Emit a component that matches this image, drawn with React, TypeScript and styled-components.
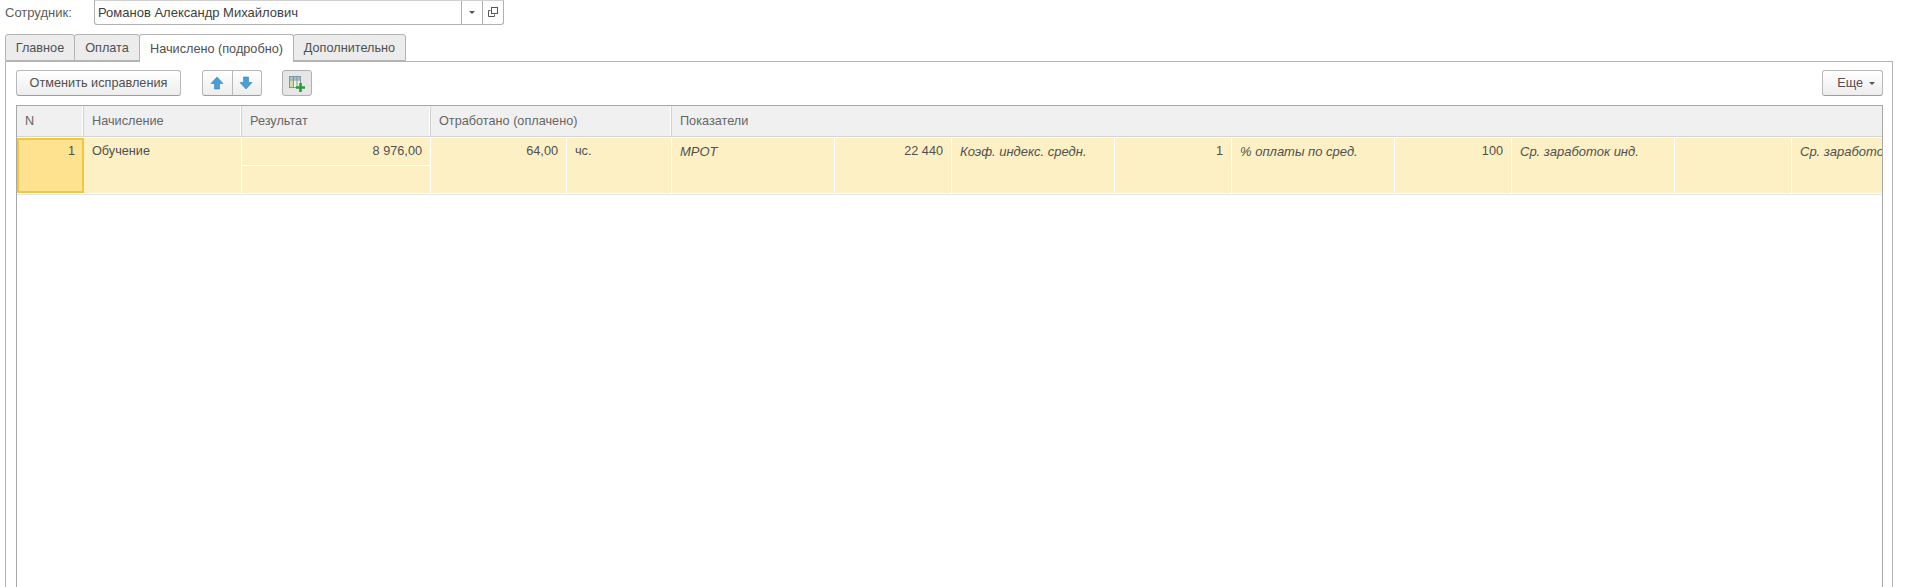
import styled, { createGlobalStyle } from "styled-components";

const GlobalStyle = createGlobalStyle`
  html, body {
    margin: 0;
    height: 100%;
    overflow: hidden;
    background: #fff;
  }

  body {
    font-family: "Liberation Sans", Arial, sans-serif;
    font-size: 12.7px;
    color: #505050;
  }

  * {
    box-sizing: border-box;
  }
`;

const subColumns = [
  { text: "МРОТ", value: "22 440" },
  { text: "Коэф. индекс. средн.", value: "1" },
  { text: "% оплаты по сред.", value: "100" },
  { text: "Ср. заработок инд.", value: "" },
  { text: "Ср. заработок", value: "" },
];

export default function App() {
  return (
    <Page>
      <GlobalStyle />
      <EmployeeRow>
        <FieldLabel>Сотрудник:</FieldLabel>
        <Select>
          <SelectValue>Романов Александр Михайлович</SelectValue>
          <SelectButton>
            <Caret />
          </SelectButton>
          <SelectButton>
            <svg width="12" height="12" viewBox="0 0 12 12" fill="none" stroke="#555">
              <path d="M3.5 4.5H1.5V10.5H7.5V8.5" />
              <rect x="4.5" y="1.5" width="6" height="6" />
            </svg>
          </SelectButton>
        </Select>
      </EmployeeRow>

      <Tabs>
        <Tab $width={70}>Главное</Tab>
        <Tab $width={66}>Оплата</Tab>
        <Tab $width={155} $active>
          Начислено (подробно)
        </Tab>
        <Tab $width={113}>Дополнительно</Tab>
      </Tabs>

      <Panel>
        <Toolbar>
          <Button>Отменить исправления</Button>
          <ButtonGroup>
            <IconButton>
              <svg width="16" height="16" viewBox="0 0 16 16">
                <path d="M8 2L14 8.5H10.5V14H5.5V8.5H2Z" fill="#4a9fd8" stroke="#2f83bd" strokeWidth="0.6" />
              </svg>
            </IconButton>
            <IconButton>
              <svg width="16" height="16" viewBox="0 0 16 16">
                <path d="M8 14L14 7.5H10.5V2H5.5V7.5H2Z" fill="#4a9fd8" stroke="#2f83bd" strokeWidth="0.6" />
              </svg>
            </IconButton>
          </ButtonGroup>
          <ToggleButton>
            <svg width="20" height="18" viewBox="0 0 20 18">
              <rect x="2.5" y="2.5" width="11" height="11" fill="#eef1ea" stroke="#7b98a3" />
              <rect x="3" y="3" width="10" height="2.5" fill="#a9c0c8" />
              <rect x="3" y="6" width="3" height="7" fill="#cfe0a6" />
              <path d="M6.5 3V13.5M10 3V13M3 6H13" stroke="#7b98a3" fill="none" />
              <path d="M13.5 9V18M9 13.5H18" stroke="#2f9a3a" strokeWidth="2.6" fill="none" />
            </svg>
          </ToggleButton>
          <MoreButton>
            Еще
            <Caret />
          </MoreButton>
        </Toolbar>

        <Table>
          <HeaderRow>
            <HeaderCell>N</HeaderCell>
            <HeaderCell>Начисление</HeaderCell>
            <HeaderCell>Результат</HeaderCell>
            <HeaderCell>Отработано (оплачено)</HeaderCell>
            <HeaderCell>Показатели</HeaderCell>
          </HeaderRow>
          <DataRow>
            <NumberCell>1</NumberCell>
            <Cell $width={158}>Обучение</Cell>
            <ResultCell>
              <ResultLine>8 976,00</ResultLine>
              <ResultLine />
            </ResultCell>
            <Cell $width={136} $right>
              64,00
            </Cell>
            <Cell $width={105}>чс.</Cell>
            {subColumns.map((col) => (
              <IndicatorPair key={col.text}>
                <Cell $width={163} $italic>
                  {col.text}
                </Cell>
                <Cell $width={117} $right>
                  {col.value}
                </Cell>
              </IndicatorPair>
            ))}
          </DataRow>
        </Table>
      </Panel>
    </Page>
  );
}

const Page = styled.div`
  height: 100vh;
  display: flex;
  flex-direction: column;
  padding: 0 12px 0 5px;
  overflow: hidden;
`;

const EmployeeRow = styled.div`
  display: flex;
  align-items: center;
  height: 24px;
  margin-bottom: 10px;
  flex: none;
`;

const FieldLabel = styled.span`
  width: 89px;
  font-size: 13px;
  color: #5c5c5c;
`;

const Select = styled.div`
  width: 410px;
  height: 25px;
  display: flex;
  border: 1px solid #b0b0b0;
  border-top-color: #d0d0d0;
  border-radius: 0 0 3px 3px;
`;

const SelectValue = styled.div`
  flex: 1;
  display: flex;
  align-items: center;
  padding-left: 3px;
  font-size: 13px;
  color: #3e3e3e;
`;

const SelectButton = styled.div`
  width: 21px;
  display: flex;
  align-items: center;
  justify-content: center;
  border-left: 1px solid #b0b0b0;
`;

const Caret = styled.span`
  display: inline-block;
  border-left: 3px solid transparent;
  border-right: 3px solid transparent;
  border-top: 3px solid #555;
`;

const Tabs = styled.div`
  display: flex;
  flex: none;
  height: 27px;
`;

const Tab = styled.div<{ $active?: boolean; $width: number }>`
  width: ${(p) => p.$width}px;
  display: flex;
  align-items: center;
  justify-content: center;
  margin-right: -1px;
  border: 1px solid #b4b4b4;
  border-radius: 3px 3px 0 0;
  background: ${(p) => (p.$active ? "#fff" : "#ececec")};
  border-bottom: ${(p) => (p.$active ? "none" : "1px solid #b4b4b4")};
  height: ${(p) => (p.$active ? "28px" : "27px")};
  position: relative;
  z-index: ${(p) => (p.$active ? 1 : 0)};
`;

const Panel = styled.div`
  flex: 1;
  min-height: 0;
  display: flex;
  flex-direction: column;
  border: 1px solid #b4b4b4;
  border-bottom: none;
  padding: 8px 9px 0 10px;
`;

const Toolbar = styled.div`
  display: flex;
  align-items: center;
  height: 26px;
  margin-bottom: 9px;
  flex: none;
`;

const Button = styled.div`
  width: 165px;
  height: 26px;
  display: flex;
  align-items: center;
  justify-content: center;
  border: 1px solid #b8b8b8;
  border-bottom-color: #9e9e9e;
  border-radius: 3px;
  background: linear-gradient(#ffffff, #ededed);
`;

const ButtonGroup = styled.div`
  display: flex;
  margin-left: 21px;
  border: 1px solid #b8b8b8;
  border-bottom-color: #9e9e9e;
  border-radius: 3px;
  height: 26px;
  background: linear-gradient(#ffffff, #ededed);
`;

const IconButton = styled.div`
  width: 29px;
  display: flex;
  align-items: center;
  justify-content: center;
  padding-right: 2px;

  & + & {
    border-left: 1px solid #b8b8b8;
  }
`;

const ToggleButton = styled.div`
  width: 30px;
  height: 26px;
  margin-left: 20px;
  display: flex;
  align-items: center;
  justify-content: center;
  border: 1px solid #b0b0b0;
  border-radius: 3px;
  background: #e6e6e6;
`;

const MoreButton = styled.div`
  width: 61px;
  height: 26px;
  margin-left: auto;
  display: flex;
  align-items: center;
  justify-content: flex-end;
  gap: 6px;
  padding-right: 7px;
  border: 1px solid #b8b8b8;
  border-bottom-color: #9e9e9e;
  border-radius: 3px;
  background: linear-gradient(#ffffff, #ededed);
`;

const Table = styled.div`
  flex: 1;
  min-height: 0;
  overflow: hidden;
  border: 1px solid #a8a8a8;
  border-bottom: none;
`;

const HeaderRow = styled.div`
  display: grid;
  grid-template-columns: 67px 158px 189px 241px 1fr;
  height: 31px;
  background: #f0f0f0;
  border-bottom: 1px solid #d4d4d4;
`;

const HeaderCell = styled.div`
  display: flex;
  align-items: center;
  padding-left: 8px;
  color: #666;
  border-right: 1px solid #d2d2d2;
  box-shadow: inset -1px 0 0 #fff;

  &:last-child {
    border-right: none;
    box-shadow: none;
  }
`;

const DataRow = styled.div`
  display: flex;
  margin-top: 1px;
  height: 56px;
  width: max-content;
  background: #fdf0c4;
  border-bottom: 1px solid #fff;
  box-shadow: 0 1px 0 #e6e6e6;
`;

const Cell = styled.div<{ $width: number; $right?: boolean; $italic?: boolean }>`
  flex: none;
  width: ${(p) => p.$width}px;
  padding: 6px 8px 0;
  text-align: ${(p) => (p.$right ? "right" : "left")};
  font-style: ${(p) => (p.$italic ? "italic" : "normal")};
  font-size: ${(p) => (p.$italic ? "13px" : "inherit")};
  border-right: 1px solid #fff;
  white-space: nowrap;
  overflow: hidden;
`;

const NumberCell = styled.div`
  flex: none;
  width: 67px;
  padding: 4px 7px 0;
  text-align: right;
  background: #ffe28f;
  border: 2px solid #f0c840;
`;

const ResultCell = styled.div`
  flex: none;
  width: 189px;
  display: flex;
  flex-direction: column;
  border-right: 1px solid #fff;
`;

const ResultLine = styled.div`
  flex: 1;
  padding: 6px 8px 0;
  text-align: right;

  & + & {
    border-top: 1px solid #fff;
  }
`;

const IndicatorPair = styled.div`
  display: flex;
  flex: none;
`;
